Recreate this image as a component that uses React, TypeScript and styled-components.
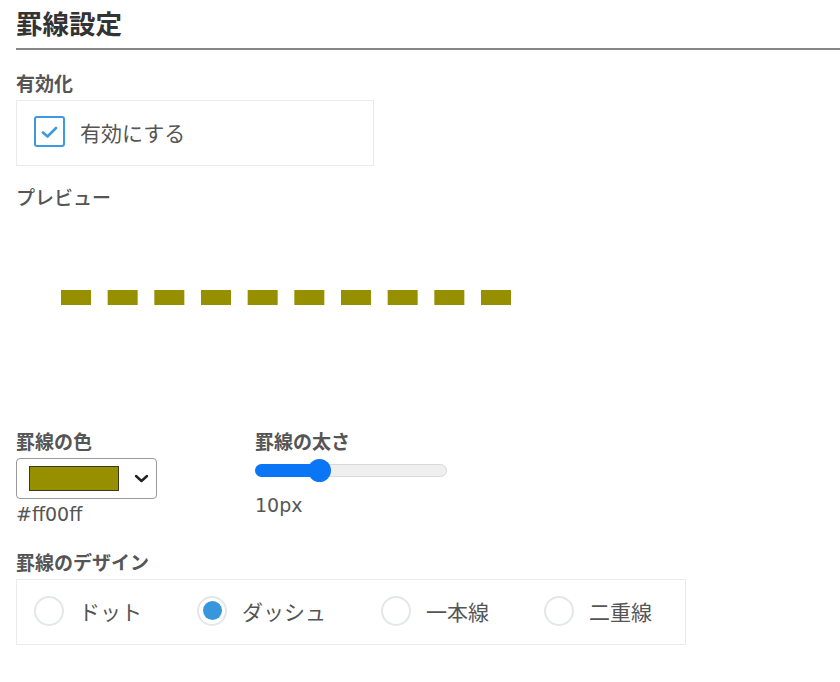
import React from 'react';
import styled, { createGlobalStyle } from 'styled-components';

const GlobalStyle = createGlobalStyle`
  html, body {
    margin: 0;
    padding: 0;
    background: #fff;
  }
  body {
    font-family: "Noto Sans CJK JP", "Noto Sans", sans-serif;
    color: #555;
  }
`;

const Page = styled.div`
  width: 840px;
  padding-left: 16px;
  box-sizing: border-box;
  overflow: hidden;
`;

const Title = styled.h2`
  margin: 0;
  padding: 6px 0 8px;
  font-size: 26.5px;
  line-height: 34px;
  font-weight: 700;
  color: #333;
  border-bottom: 2px solid #868686;
`;

const FieldLabel = styled.div<{ $top: number; $weight?: number }>`
  margin-top: ${(p) => p.$top}px;
  font-size: 19px;
  line-height: 26px;
  font-weight: ${(p) => p.$weight ?? 700};
  color: #555;
`;

const OptionBox = styled.div<{ $width: number; $gap?: number }>`
  margin-top: 4px;
  width: ${(p) => p.$width}px;
  height: 66px;
  box-sizing: border-box;
  border: 1px solid #ebebeb;
  display: flex;
  align-items: center;
  padding: 0 0 3px 17px;
  gap: ${(p) => p.$gap ?? 0}px;
`;

const Option = styled.label`
  display: flex;
  align-items: center;
  gap: 15px;
  font-size: 21px;
  line-height: 30px;
  color: #555;
`;

const CheckBox = styled.span`
  width: 31px;
  height: 31px;
  box-sizing: border-box;
  border: 2.5px solid #3d9ae2;
  border-radius: 3px;
  display: flex;
  align-items: center;
  justify-content: center;
`;

const Radio = styled.span<{ $checked?: boolean }>`
  width: 30px;
  height: 30px;
  box-sizing: border-box;
  border: 2px solid #e4e7e7;
  border-radius: 50%;
  display: flex;
  align-items: center;
  justify-content: center;
  &::after {
    content: '';
    width: 19px;
    height: 19px;
    border-radius: 50%;
    background: ${(p) => (p.$checked ? '#3897dc' : 'transparent')};
  }
`;

const Preview = styled.div`
  height: 218px;
  box-sizing: border-box;
  padding: 76px 0 0 45px;
`;

const Row = styled.div`
  display: flex;
`;

const Column = styled.div<{ $width?: number }>`
  width: ${(p) => (p.$width ? `${p.$width}px` : 'auto')};
  display: flex;
  flex-direction: column;
`;

const ColorSelect = styled.div`
  margin-top: 4px;
  width: 141px;
  height: 41px;
  box-sizing: border-box;
  border: 1px solid #9a9a9a;
  border-radius: 4px;
  display: flex;
  align-items: center;
  padding: 0 7px 0 12px;
`;

const Swatch = styled.span<{ $color: string }>`
  width: 90px;
  height: 25px;
  box-sizing: border-box;
  border: 1px solid #3a3a1a;
  background: ${(p) => p.$color};
`;

const Chevron = styled.svg`
  margin-left: auto;
`;

const ValueText = styled.div<{ $top: number }>`
  margin-top: ${(p) => p.$top}px;
  font-family: "DejaVu Sans", "Noto Sans CJK JP", sans-serif;
  font-size: 19px;
  line-height: 24px;
  color: #555;
`;

const SliderWrap = styled.div`
  position: relative;
  margin-top: 4px;
  width: 192px;
  height: 24px;
  display: flex;
  align-items: center;
`;

const Track = styled.div`
  width: 100%;
  height: 13px;
  box-sizing: border-box;
  border: 1px solid #d9d9d9;
  border-radius: 7px;
  background: #efefef;
`;

const Fill = styled.div`
  position: absolute;
  left: 0;
  top: 5.5px;
  height: 13px;
  border-radius: 7px;
  background: #0a75f5;
`;

const Thumb = styled.div`
  position: absolute;
  top: 0.5px;
  width: 23px;
  height: 23px;
  margin-left: -11.5px;
  border-radius: 50%;
  background: #0a75f5;
`;

const designs = ['ドット', 'ダッシュ', '一本線', '二重線'];

export default function App() {
  const width = 10;
  const pct = (width / 30) * 100;
  const color = '#969000';

  return (
    <Page>
      <GlobalStyle />
      <Title>罫線設定</Title>

      <FieldLabel $top={20}>有効化</FieldLabel>
      <OptionBox $width={358}>
        <Option>
          <CheckBox>
            <svg width="17" height="12" viewBox="0 0 17 12">
              <path d="M2 6.5 L6.5 10.5 L15 2" fill="none" stroke="#3d9ae2" strokeWidth="2.6" strokeLinecap="round" strokeLinejoin="round" />
            </svg>
          </CheckBox>
          有効にする
        </Option>
      </OptionBox>

      <FieldLabel $top={18} $weight={500}>プレビュー</FieldLabel>
      <Preview>
        <svg width="450" height="15" viewBox="0 0 450 15">
          <line x1="0" y1="7.5" x2="450" y2="7.5" stroke={color} strokeWidth="15" strokeDasharray="30 16.667" />
        </svg>
      </Preview>

      <Row>
        <Column $width={239}>
          <FieldLabel $top={0}>罫線の色</FieldLabel>
          <ColorSelect>
            <Swatch $color={color} />
            <Chevron width="15" height="9" viewBox="0 0 15 9">
              <path d="M2 2 L7.5 7 L13 2" fill="none" stroke="#222" strokeWidth="2.4" strokeLinecap="round" strokeLinejoin="round" />
            </Chevron>
          </ColorSelect>
          <ValueText $top={3}>#ff00ff</ValueText>
        </Column>
        <Column>
          <FieldLabel $top={0}>罫線の太さ</FieldLabel>
          <SliderWrap>
            <Track />
            <Fill style={{ width: `${pct}%` }} />
            <Thumb style={{ left: `${pct}%` }} />
          </SliderWrap>
          <ValueText $top={11}>{width}px</ValueText>
        </Column>
      </Row>

      <FieldLabel $top={23}>罫線のデザイン</FieldLabel>
      <OptionBox $width={670} $gap={55}>
        {designs.map((d) => (
          <Option key={d}>
            <Radio $checked={d === 'ダッシュ'} />
            {d}
          </Option>
        ))}
      </OptionBox>
    </Page>
  );
}
